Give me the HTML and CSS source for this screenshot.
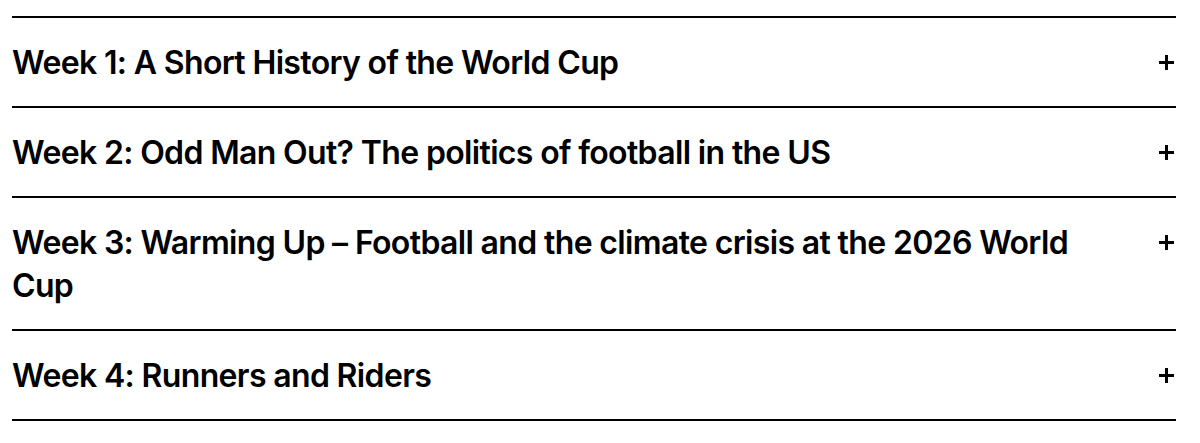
FILE: index.html
```html
<!DOCTYPE html>
<html lang="en">
<head>
<meta charset="utf-8">
<title>Course weeks</title>
<link rel="stylesheet" href="styles.css">
</head>
<body>
<div class="accordion">
  <div class="item">
    <div class="title">Week 1: A Short History of the World Cup</div>
    <svg class="plus" viewBox="0 0 15 15" width="15" height="15"><path d="M6 0h3v6h6v3H9v6H6V9H0V6h6z"/></svg>
  </div>
  <div class="item">
    <div class="title">Week 2: Odd Man Out? The politics of football in the US</div>
    <svg class="plus" viewBox="0 0 15 15" width="15" height="15"><path d="M6 0h3v6h6v3H9v6H6V9H0V6h6z"/></svg>
  </div>
  <div class="item">
    <div class="title">Week 3: Warming Up – Football and the climate crisis at the 2026 World Cup</div>
    <svg class="plus" viewBox="0 0 15 15" width="15" height="15"><path d="M6 0h3v6h6v3H9v6H6V9H0V6h6z"/></svg>
  </div>
  <div class="item">
    <div class="title">Week 4: Runners and Riders</div>
    <svg class="plus" viewBox="0 0 15 15" width="15" height="15"><path d="M6 0h3v6h6v3H9v6H6V9H0V6h6z"/></svg>
  </div>
</div>
</body>
</html>
```
FILE: styles.css
```css
html, body {
  margin: 0;
  padding: 0;
  background: #ffffff;
}
body {
  padding: 16px 0 0 12px;
  font-family: Inter, "Liberation Sans", Arial, sans-serif;
  color: #000000;
}
.accordion {
  width: 1164px;
  border-bottom: 2px solid #000;
}
.item {
  display: flex;
  align-items: flex-start;
  gap: 40px;
  border-top: 2px solid #000;
  padding: 22.5px 2px 22.5px 0;
}
.title {
  flex: 1;
  font-size: 32px;
  font-weight: 600;
  line-height: 43px;
  letter-spacing: -0.65px;
}
.plus {
  flex: none;
  display: block;
  margin-top: 14px;
  fill: #000;
}
```
